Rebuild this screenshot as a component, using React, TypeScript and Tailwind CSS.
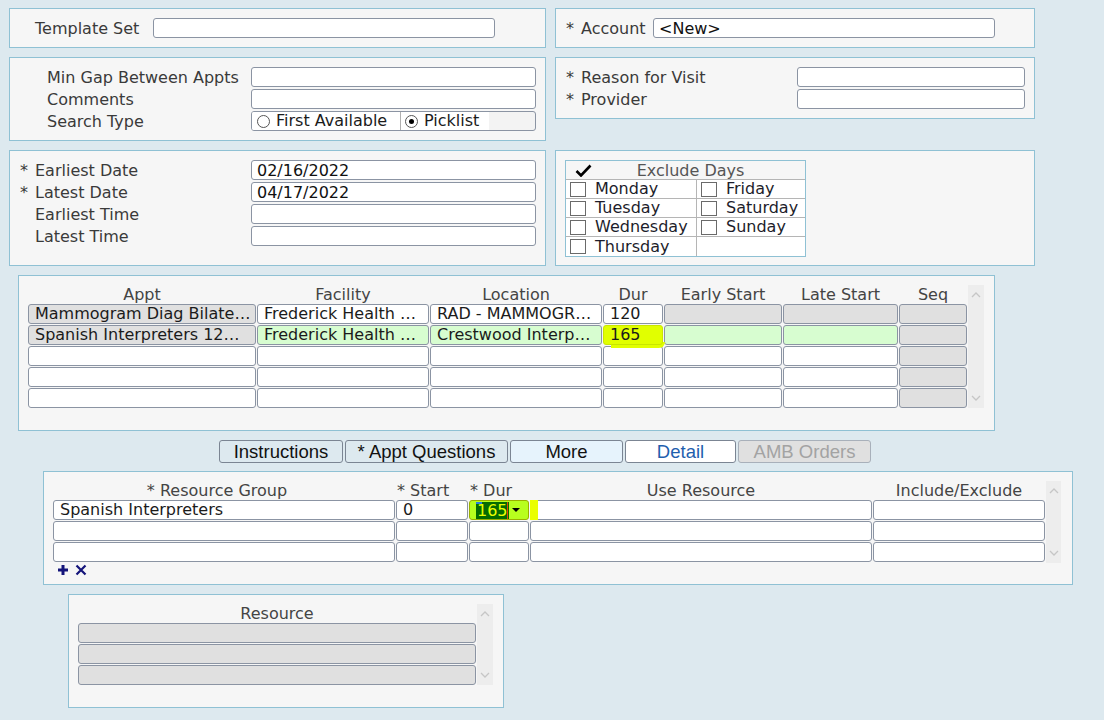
import React from "react";

const inputCls =
  "h-[20px] rounded-[3px] border border-[#8b94a3] bg-white px-[5px] leading-[19px] text-[#111] whitespace-nowrap overflow-hidden";

function Panel({ className, children }: { className: string; children?: React.ReactNode }) {
  return <div className={"border border-[#8fc1d4] bg-[#f6f6f6] " + className}>{children}</div>;
}

function Lbl({ star, children, className = "" }: { star?: boolean; children: React.ReactNode; className?: string }) {
  return (
    <div className={"relative top-[1px] flex h-[20px] items-center whitespace-nowrap pl-[10px] leading-[20px] text-[#3a3a3a] " + className}>
      <span className="w-[15px]">{star ? "*" : ""}</span>
      <span>{children}</span>
    </div>
  );
}

function Chevron({ up }: { up?: boolean }) {
  return (
    <svg width="10" height="7" viewBox="0 0 10 7">
      <polyline
        points={up ? "1,6 5,2 9,6" : "1,1 5,5 9,1"}
        fill="none"
        stroke="#c6c6c6"
        strokeWidth="1.3"
      />
    </svg>
  );
}

function Scrollbar({ className }: { className: string }) {
  return (
    <div className={"flex flex-col items-center justify-between bg-[#ededed] py-[6px] " + className}>
      <Chevron up />
      <Chevron />
    </div>
  );
}

function CheckBox() {
  return <span className="inline-block h-[15px] w-[16px] border border-[#6a6a6a] bg-white" />;
}

type Cell = { t?: string; bg: string };

const apptCols = ["w-[228px]", "w-[172px]", "w-[172px]", "w-[60px]", "w-[118px]", "w-[115px]", "w-[68px]"];
const W = "bg-white";
const G = "bg-[#e0e0e0]";
const GR = "bg-[#d7fdd0]";

const apptRows: Cell[][] = [
  [
    { t: "Mammogram Diag Bilate…", bg: G },
    { t: "Frederick Health …", bg: W },
    { t: "RAD - MAMMOGR…", bg: W },
    { t: "120", bg: W },
    { bg: G },
    { bg: G },
    { bg: G },
  ],
  [
    { t: "Spanish Interpreters 12…", bg: G },
    { t: "Frederick Health …", bg: GR },
    { t: "Crestwood Interp…", bg: GR },
    { t: "165", bg: "yellow" },
    { bg: GR },
    { bg: GR },
    { bg: G },
  ],
  [{ bg: W }, { bg: W }, { bg: W }, { bg: W }, { bg: W }, { bg: W }, { bg: G }],
  [{ bg: W }, { bg: W }, { bg: W }, { bg: W }, { bg: W }, { bg: W }, { bg: G }],
  [{ bg: W }, { bg: W }, { bg: W }, { bg: W }, { bg: W }, { bg: W }, { bg: G }],
];

const cellBase =
  "h-[20px] shrink-0 rounded-[3px] border border-[#8b94a3] px-[6px] leading-[18px] text-[#1b1b1b] whitespace-nowrap overflow-hidden";

function ApptTable() {
  const heads = ["Appt", "Facility", "Location", "Dur", "Early Start", "Late Start", "Seq"];
  return (
    <div className="flex gap-[1px]">
      <div className="flex flex-col gap-[1px]">
        <div className="flex h-[18px] gap-[1px] text-[#444]">
          {heads.map((h, i) => (
            <div key={i} className={apptCols[i] + " text-center leading-[20px]"}>
              {h}
            </div>
          ))}
        </div>
        {apptRows.map((r, ri) => (
          <div key={ri} className="flex gap-[1px]">
            {r.map((c, ci) =>
              c.bg === "yellow" ? (
                <div key={ci} className={apptCols[ci] + " relative"}>
                  <div className="absolute -bottom-[3px] left-[8px] h-[6px] w-[54px] rounded-br-[6px] bg-[#e1ff00]" />
                  <div className={cellBase + " relative w-full border-[#c9e600] bg-[#e1ff00]"}>{c.t}</div>
                </div>
              ) : (
                <div key={ci} className={cellBase + " " + apptCols[ci] + " " + c.bg}>
                  {c.t}
                </div>
              )
            )}
          </div>
        ))}
      </div>
      <Scrollbar className="h-[123px] w-[16px]" />
    </div>
  );
}

const rgCols = ["w-[342px]", "w-[72px]", "w-[60px]", "w-[342px]", "w-[172px]"];
const rgHeadAlign = ["text-center pr-[14px]", "text-left pl-[1px]", "text-left pl-[1px]", "text-center", "text-center"];

function ResourceGroupTable() {
  const heads = ["* Resource Group", "* Start", "* Dur", "Use Resource", "Include/Exclude"];
  return (
    <div className="flex gap-[1px]">
      <div className="flex flex-col gap-[1px]">
        <div className="flex h-[18px] gap-[1px] text-[#444]">
          {heads.map((h, i) => (
            <div key={i} className={rgCols[i] + " whitespace-nowrap leading-[20px] " + rgHeadAlign[i]}>
              {h}
            </div>
          ))}
        </div>
        <div className="flex gap-[1px]">
          <div className={cellBase + " bg-white " + rgCols[0]}>Spanish Interpreters</div>
          <div className={cellBase + " bg-white " + rgCols[1]}>0</div>
          <div className={"relative h-[20px] shrink-0 rounded-[3px] border border-[#9ab000] bg-[#b8ff1e] " + rgCols[2]}>
            <div className="absolute left-[6px] top-[1px] h-[17px] bg-[#066b00] px-[1px] leading-[17px] text-[#eaff00]">
              165
            </div>
            <div className="absolute left-[6px] top-[1px] h-[2px] w-[6px] bg-[#2a7de0]" />
            <div className="absolute left-[37px] top-[1px] h-[17px] w-[1px] bg-[#e2460a]" />
            <div className="absolute right-[8px] top-[7px] h-0 w-0 border-l-[4px] border-r-[4px] border-t-[4px] border-l-transparent border-r-transparent border-t-black" />
          </div>
          <div className={"relative h-[20px] shrink-0 rounded-[3px] border border-[#8b94a3] bg-white " + rgCols[3]}>
            <div className="absolute -left-[1px] -top-[1px] h-[20px] w-[8px] bg-[#eaff00]" />
          </div>
          <div className={cellBase + " bg-white " + rgCols[4]} />
        </div>
        {[0, 1].map((r) => (
          <div key={r} className="flex gap-[1px]">
            {rgCols.map((c, i) => (
              <div key={i} className={cellBase + " bg-white " + c} />
            ))}
          </div>
        ))}
        <div className="flex h-[14px] items-center gap-[6px] pl-[4px]">
          <svg width="12" height="12" viewBox="0 0 12 12">
            <path d="M6 1v10M1 6h10" stroke="#14147a" strokeWidth="3" />
          </svg>
          <svg width="12" height="12" viewBox="0 0 12 12">
            <path d="M1.5 1.5l9 9M10.5 1.5l-9 9" stroke="#14147a" strokeWidth="2.2" />
          </svg>
        </div>
      </div>
      <Scrollbar className="h-[82px] w-[15px]" />
    </div>
  );
}

function ResourceTable() {
  return (
    <div className="flex gap-[1px]">
      <div className="flex flex-col gap-[1px]">
        <div className="h-[18px] w-[398px] text-center leading-[20px] text-[#444]">Resource</div>
        {[0, 1, 2].map((r) => (
          <div key={r} className="h-[20px] w-[398px] rounded-[3px] border border-[#8b94a3] bg-[#e0e0e0]" />
        ))}
      </div>
      <Scrollbar className="h-[81px] w-[16px]" />
    </div>
  );
}

function ExcludeDays() {
  const rows: [string, string][] = [
    ["Monday", "Friday"],
    ["Tuesday", "Saturday"],
    ["Wednesday", "Sunday"],
    ["Thursday", ""],
  ];
  return (
    <div className="w-[241px] border border-[#8fc1d4] bg-white text-[#1d1d2b]">
      <div className="relative h-[19px] border-b border-[#b5b5b5] bg-[#f6f6f6] pl-[10px] text-center leading-[19px] text-[#555]">
        <svg className="absolute left-[9px] top-[3px]" width="17" height="13" viewBox="0 0 17 13">
          <path d="M1.5 7 L6 11.5 L15.5 1.5" fill="none" stroke="#000" strokeWidth="2.6" />
        </svg>
        Exclude Days
      </div>
      {rows.map((r, i) => (
        <div key={i} className={"flex h-[19px] " + (i < 3 ? "border-b border-[#b5b5b5]" : "")}>
          <div className="flex w-[131px] items-center gap-[9px] border-r border-[#b5b5b5] pl-[4px] leading-[18px]">
            <CheckBox />
            <span>{r[0]}</span>
          </div>
          <div className="flex flex-1 items-center gap-[9px] pl-[4px] leading-[18px]">
            {r[1] ? (
              <>
                <CheckBox />
                <span>{r[1]}</span>
              </>
            ) : null}
          </div>
        </div>
      ))}
    </div>
  );
}

function Btn({ children, className }: { children: React.ReactNode; className: string }) {
  return (
    <div
      className={
        "flex h-[23px] items-center justify-center rounded-[3px] border border-[#7b8593] font-['Liberation_Sans',sans-serif] text-[18.5px] leading-[20px] " +
        className
      }
    >
      {children}
    </div>
  );
}

export default function App() {
  return (
    <div className="h-[720px] w-full overflow-hidden bg-[#dde9ef] font-['DejaVu_Sans',sans-serif] text-[16px]">
      <div className="flex flex-col pl-[9px] pt-[8px]">
        {/* Row 1 */}
        <div className="flex items-start gap-[9px]">
          <Panel className="flex h-[40px] w-[537px] items-center">
            <div className="w-[143px] shrink-0">
              <Lbl>Template Set</Lbl>
            </div>
            <div className={inputCls + " w-[342px]"} />
          </Panel>
          <Panel className="flex h-[40px] w-[480px] items-center">
            <div className="w-[97px] shrink-0">
              <Lbl star>Account</Lbl>
            </div>
            <div className={inputCls + " w-[342px]"}>&lt;New&gt;</div>
          </Panel>
        </div>

        {/* Row 2 */}
        <div className="mt-[9px] flex items-start gap-[9px]">
          <Panel className="flex h-[84px] w-[537px] flex-col gap-[2px] pt-[9px]">
            {["Min Gap Between Appts", "Comments"].map((l) => (
              <div key={l} className="flex">
                <div className="relative top-[1px] h-[20px] w-[241px] whitespace-nowrap pl-[37px] leading-[20px] text-[#3a3a3a]">{l}</div>
                <div className={inputCls + " w-[285px]"} />
              </div>
            ))}
            <div className="flex">
              <div className="relative top-[1px] h-[20px] w-[241px] pl-[37px] leading-[20px] text-[#3a3a3a]">Search Type</div>
              <div className="flex h-[20px] w-[285px] overflow-hidden rounded-[3px] border border-[#8b94a3] bg-[#f3f3f3] leading-[18px] text-[#1b1b1b]">
                <div className="flex w-[149px] items-center gap-[6px] border-r border-[#b0b0b0] bg-white pl-[5px]">
                  <span className="inline-block h-[13px] w-[13px] rounded-full border border-[#555] bg-white" />
                  <span className="whitespace-nowrap">First Available</span>
                </div>
                <div className="flex w-[88px] items-center gap-[6px] bg-white pl-[4px]">
                  <span className="flex h-[13px] w-[13px] items-center justify-center rounded-full border border-[#555] bg-white">
                    <span className="h-[5px] w-[5px] rounded-full bg-black" />
                  </span>
                  <span>Picklist</span>
                </div>
              </div>
            </div>
          </Panel>
          <Panel className="flex h-[62px] w-[480px] flex-col gap-[2px] pt-[9px]">
            {["Reason for Visit", "Provider"].map((l) => (
              <div key={l} className="flex">
                <div className="w-[241px]">
                  <Lbl star>{l}</Lbl>
                </div>
                <div className={inputCls + " w-[228px]"} />
              </div>
            ))}
          </Panel>
        </div>

        {/* Row 3 */}
        <div className="mt-[9px] flex items-start gap-[9px]">
          <Panel className="flex h-[116px] w-[537px] flex-col gap-[2px] pt-[9px]">
            {(
              [
                ["Earliest Date", true, "02/16/2022"],
                ["Latest Date", true, "04/17/2022"],
                ["Earliest Time", false, ""],
                ["Latest Time", false, ""],
              ] as [string, boolean, string][]
            ).map(([l, s, v]) => (
              <div key={l} className="flex">
                <div className="w-[241px]">
                  <Lbl star={s}>{l}</Lbl>
                </div>
                <div className={inputCls + " w-[285px]"}>{v}</div>
              </div>
            ))}
          </Panel>
          <Panel className="h-[116px] w-[480px] pl-[9px] pt-[9px]">
            <ExcludeDays />
          </Panel>
        </div>

        {/* Appt table */}
        <Panel className="ml-[9px] mt-[9px] h-[156px] w-[977px] pl-[9px] pt-[9px]">
          <ApptTable />
        </Panel>

        {/* Buttons */}
        <div className="ml-[210px] mt-[9px] flex gap-[2px]">
          <Btn className="w-[124px] bg-[#dde9ef] text-[#111]">Instructions</Btn>
          <Btn className="w-[163px] bg-[#dde9ef] text-[#111]">* Appt Questions</Btn>
          <Btn className="w-[113px] bg-[#e6f3fc] text-[#111]">More</Btn>
          <Btn className="w-[111px] bg-white text-[#1f5fae]">Detail</Btn>
          <Btn className="w-[133px] border-[#a8b0ba] bg-[#e0e0e0] text-[#a3a3a3]">AMB Orders</Btn>
        </div>

        {/* Resource group */}
        <Panel className="ml-[34px] mt-[8px] h-[114px] w-[1030px] pl-[9px] pt-[9px]">
          <ResourceGroupTable />
        </Panel>

        {/* Resource */}
        <Panel className="ml-[59px] mt-[9px] h-[114px] w-[436px] pl-[9px] pt-[9px]">
          <ResourceTable />
        </Panel>
      </div>
    </div>
  );
}
